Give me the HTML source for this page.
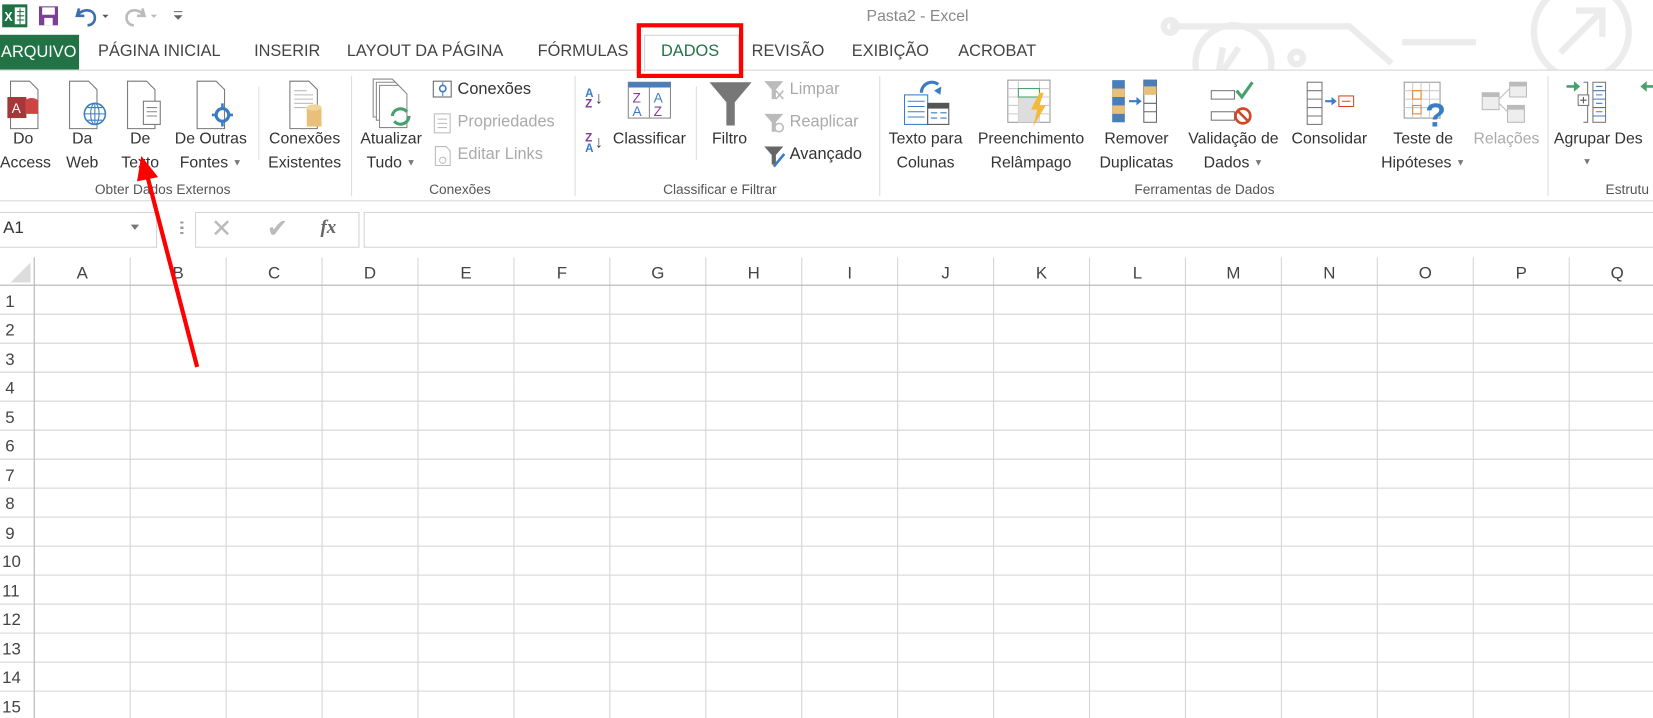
<!DOCTYPE html>
<html><head><meta charset="utf-8"><style>
html,body{margin:0;padding:0;overflow:hidden;background:#fff;width:1653px;height:718px}
#w{position:absolute;left:0;top:0;width:1568px;height:681px;transform:scale(1.05421,1.05433);transform-origin:0 0;font-family:"Liberation Sans",sans-serif;color:#444}
.a{position:absolute;white-space:nowrap}
.tab{position:absolute;top:40px;font-size:15.5px;color:#444}
.lb{position:absolute;font-size:15px;color:#333;text-align:center;line-height:23px;white-space:nowrap}
.lb small,.dd{font-size:9px;color:#777;vertical-align:2px}
.gl{position:absolute;top:172px;font-size:13px;color:#555;white-space:nowrap}
.sep{position:absolute;top:72px;width:1px;height:114px;background:#ddd}
.dis{color:#aaa}
</style></head><body><div id="w">
<!-- background circuit -->
<svg class="a" style="left:1080px;top:0" width="488" height="66" viewBox="0 0 488 66"><g fill="none" stroke="#ececec" stroke-width="6"><path d="M30 25 L200 25 L240 60"/><circle cx="30" cy="25" r="6"/><circle cx="90" cy="60" r="36"/><path d="M75 75 L95 45 M80 45 L75 75 L100 70"/><circle cx="150" cy="55" r="6"/><circle cx="420" cy="30" r="45"/><path d="M400 50 L440 10 M415 10 L440 10 L440 35"/><path d="M250 40 L320 40"/></g></svg>
<!-- QAT -->
<svg class="a" style="left:2px;top:4px" width="24" height="22"><rect x="0" y="0" width="24" height="22" fill="#1e7145"/><rect x="12" y="3" width="10" height="16" fill="#fff"/><text x="2" y="16" font-size="12" fill="#fff" font-weight="bold" font-family="Liberation Sans">X</text><path d="M14 7h7M14 11h7M14 15h7M17 4v15" stroke="#1e7145"/></svg>
<svg class="a" style="left:36px;top:5px" width="20" height="20"><rect x="1" y="1" width="18" height="18" fill="#7e3d97"/><rect x="4" y="2" width="12" height="7" fill="#fff"/><rect x="6" y="12" width="8" height="7" fill="#fff"/></svg>
<svg class="a" style="left:70px;top:4px" width="40" height="22"><path d="M5 4 L3 11 L10 11 M4 10 C8 4 20 4 20 13 C20 18 16 20 13 20" fill="none" stroke="#3b6fb0" stroke-width="2.5"/><path d="M27 10l3 3 3-3z" fill="#555"/></svg>
<svg class="a" style="left:115px;top:4px" width="45" height="22"><path d="M20 4 L22 11 L15 11 M21 10 C17 4 5 4 5 13 C5 18 9 20 12 20" fill="none" stroke="#bbb" stroke-width="2.5"/><path d="M28 10l3 3 3-3z" fill="#bbb"/></svg>
<svg class="a" style="left:164px;top:9px" width="10" height="12"><path d="M1 2h8M2 6l3 3 3-3z" stroke="#666" fill="#666"/></svg>
<div class="a" style="left:822px;top:7px;font-size:15px;color:#888">Pasta2 - Excel</div>
<!-- tabs -->
<div class="a" style="left:0;top:33px;width:74px;height:33px;background:#217346;color:#fff;font-size:15.5px;line-height:33px;padding-left:1px">ARQUIVO</div>
<div class="tab" style="left:93px">PÁGINA INICIAL</div>
<div class="tab" style="left:241px">INSERIR</div>
<div class="tab" style="left:329px">LAYOUT DA PÁGINA</div>
<div class="tab" style="left:510px">FÓRMULAS</div>
<div class="a" style="left:611px;top:33px;width:88px;height:34px;border:1px solid #d4d4d4;border-bottom:none;background:#fff"></div>
<div class="tab" style="left:627px;color:#217346">DADOS</div>
<div class="tab" style="left:713px">REVISÃO</div>
<div class="tab" style="left:808px">EXIBIÇÃO</div>
<div class="tab" style="left:909px">ACROBAT</div>
<div class="a" style="left:0;top:66px;width:1568px;height:1px;background:#d4d4d4"></div>
<div class="a" style="left:0;top:190px;width:1568px;height:1px;background:#d4d4d4"></div>
<div class="a" style="left:0;top:191px;width:1568px;height:44px;background:#fff"></div>
<div class="a" style="left:604px;top:22px;width:93px;height:44px;border:4px solid #f00"></div>
<!-- ribbon icons group 1 -->
<svg class="a" style="left:6px;top:76px" width="40" height="48"><path d="M4 1h18l8 8v37H4z" fill="#fff" stroke="#777"/><rect x="1" y="16" width="18" height="20" fill="#a4373a"/><text x="5" y="31" font-size="13" fill="#fff" font-family="Liberation Sans">A</text><ellipse cx="24" cy="20" rx="6" ry="3" fill="#c44" /><rect x="18" y="20" width="12" height="12" fill="#c44"/></svg>
<svg class="a" style="left:62px;top:76px" width="40" height="48"><path d="M4 1h18l8 8v37H4z" fill="#fff" stroke="#777"/><circle cx="28" cy="32" r="10" fill="#fff" stroke="#3b7dc4" stroke-width="1.5"/><path d="M18 32h20M28 22v20M21 26h14M21 38h14" stroke="#3b7dc4"/><ellipse cx="28" cy="32" rx="4" ry="10" fill="none" stroke="#3b7dc4"/></svg>
<svg class="a" style="left:117px;top:76px" width="40" height="48"><path d="M4 1h18l8 8v37H4z" fill="#fff" stroke="#777"/><rect x="19" y="20" width="16" height="22" fill="#fff" stroke="#777"/><path d="M22 26h10M22 30h10M22 34h10" stroke="#888"/></svg>
<svg class="a" style="left:183px;top:76px" width="40" height="48"><path d="M4 1h18l8 8v37H4z" fill="#fff" stroke="#777"/><circle cx="28" cy="33" r="6" fill="none" stroke="#3b7dc4" stroke-width="3"/><path d="M28 22v5M28 39v5M18 33h4M34 33h4" stroke="#3b7dc4" stroke-width="2.5"/></svg>
<div class="sep" style="left:245px;top:82px;height:70px"></div>
<svg class="a" style="left:271px;top:76px" width="45" height="48"><path d="M4 1h18l8 8v37H4z" fill="#fff" stroke="#777"/><path d="M8 10h12M8 14h18M8 18h18M8 22h18M8 26h12" stroke="#bbb"/><rect x="20" y="26" width="14" height="18" fill="#e8c07a"/><ellipse cx="27" cy="26" rx="7" ry="3" fill="#f0d49a"/></svg>
<div class="lb" style="left:0;top:120px;width:44px">Do<br>Access</div>
<div class="lb" style="left:56px;top:120px;width:44px">Da<br>Web</div>
<div class="lb" style="left:111px;top:120px;width:44px">De<br>Texto</div>
<div class="lb" style="left:160px;top:120px;width:80px">De Outras<br>Fontes <small>▼</small></div>
<div class="lb" style="left:250px;top:120px;width:78px">Conexões<br>Existentes</div>
<div class="gl" style="left:90px">Obter Dados Externos</div>
<div class="sep" style="left:333px"></div>
<!-- conexoes -->
<svg class="a" style="left:350px;top:74px" width="48" height="50"><path d="M4 1h18l6 6v30H4z" fill="#fff" stroke="#888"/><path d="M7 4h18l6 6v30H7z" fill="#fff" stroke="#888"/><path d="M10 7h18l8 8v32H10z" fill="#fff" stroke="#888"/><path d="M22 36a8 8 0 0 1 14-4M38 36a8 8 0 0 1-14 5" fill="none" stroke="#47a16b" stroke-width="3"/></svg>
<div class="lb" style="left:337px;top:120px;width:68px">Atualizar<br>Tudo <small>▼</small></div>
<svg class="a" style="left:410px;top:76px" width="20" height="20"><rect x="1" y="1" width="17" height="15" fill="#fff" stroke="#666"/><circle cx="10" cy="8" r="3" fill="none" stroke="#3b7dc4" stroke-width="1.5"/><path d="M10 2v3M10 11v4" stroke="#3b7dc4"/></svg>
<div class="a" style="left:434px;top:76px;font-size:15.5px;color:#333">Conexões</div>
<svg class="a" style="left:410px;top:107px" width="20" height="20"><rect x="2" y="1" width="15" height="18" fill="#fff" stroke="#bbb"/><path d="M5 6h9M5 10h9M5 14h9" stroke="#bbb"/></svg>
<div class="a dis" style="left:434px;top:107px;font-size:15.5px">Propriedades</div>
<svg class="a" style="left:410px;top:138px" width="20" height="20"><path d="M3 1h10l4 4v14H3z" fill="#fff" stroke="#bbb"/><circle cx="10" cy="14" r="3" fill="none" stroke="#bbb"/></svg>
<div class="a dis" style="left:434px;top:138px;font-size:15.5px">Editar Links</div>
<div class="gl" style="left:407px">Conexões</div>
<div class="sep" style="left:545px"></div>
<!-- classificar -->
<div class="a" style="left:555px;top:84px;font-size:11px;line-height:10px;font-weight:bold;color:#3b7dc4">A<br><span style="color:#7e3d97">Z</span></div><div class="a" style="left:564px;top:85px;font-size:16px;color:#444">↓</div>
<div class="a" style="left:555px;top:126px;font-size:11px;line-height:10px;font-weight:bold;color:#7e3d97">Z<br><span style="color:#3b7dc4">A</span></div><div class="a" style="left:564px;top:127px;font-size:16px;color:#444">↓</div>
<svg class="a" style="left:595px;top:77px" width="42" height="36"><rect x="1" y="1" width="40" height="34" fill="#fff" stroke="#888"/><rect x="1" y="1" width="40" height="5" fill="#4a7ebb"/><path d="M21 6v29" stroke="#888"/><text x="5" y="20" font-size="13" fill="#7e3d97" font-family="Liberation Sans">Z</text><text x="5" y="33" font-size="13" fill="#3b7dc4" font-family="Liberation Sans">A</text><text x="25" y="20" font-size="13" fill="#3b7dc4" font-family="Liberation Sans">A</text><text x="25" y="33" font-size="13" fill="#7e3d97" font-family="Liberation Sans">Z</text></svg>
<div class="lb" style="left:578px;top:120px;width:76px">Classificar</div>
<div class="sep" style="left:660px;top:82px;height:70px"></div>
<svg class="a" style="left:672px;top:77px" width="42" height="42"><path d="M1 1h40L25 20v22h-8V20z" fill="#777"/></svg>
<div class="lb" style="left:670px;top:120px;width:44px">Filtro</div>
<svg class="a" style="left:724px;top:76px" width="22" height="20"><path d="M1 1h18l-7 8v9h-4V9z" fill="#bbb"/><path d="M12 10l7 8M19 10l-7 8" stroke="#bbb" stroke-width="1.5"/></svg>
<div class="a dis" style="left:749px;top:76px;font-size:15.5px">Limpar</div>
<svg class="a" style="left:724px;top:107px" width="22" height="20"><path d="M1 1h18l-7 8v9h-4V9z" fill="#bbb"/><circle cx="15" cy="14" r="4" fill="#fff" stroke="#bbb" stroke-width="1.5"/></svg>
<div class="a dis" style="left:749px;top:107px;font-size:15.5px">Reaplicar</div>
<svg class="a" style="left:724px;top:138px" width="22" height="22"><path d="M1 1h18l-7 8v9h-4V9z" fill="#666"/><path d="M20 8l-10 12" stroke="#3b7dc4" stroke-width="2.5"/></svg>
<div class="a" style="left:749px;top:138px;font-size:15.5px;color:#333">Avançado</div>
<div class="gl" style="left:629px">Classificar e Filtrar</div>
<div class="sep" style="left:834px"></div>
<!-- ferramentas -->
<svg class="a" style="left:856px;top:74px" width="48" height="48"><path d="M18 14a10 10 0 0 1 16-8" fill="none" stroke="#3b7dc4" stroke-width="3"/><path d="M30 12l6 4 1-8z" fill="#3b7dc4"/><rect x="2" y="16" width="22" height="28" fill="#fff" stroke="#3b7dc4"/><path d="M5 22h16M5 27h16M5 32h16M5 37h16" stroke="#3b7dc4"/><rect x="24" y="24" width="20" height="20" fill="#fff" stroke="#555"/><rect x="24" y="24" width="20" height="5" fill="#555"/><path d="M27 33h6M36 33h6M27 38h6M36 38h6" stroke="#3b7dc4"/></svg>
<div class="lb" style="left:838px;top:120px;width:80px">Texto para<br>Colunas</div>
<svg class="a" style="left:954px;top:74px" width="48" height="48"><rect x="2" y="2" width="40" height="40" fill="#fff" stroke="#999"/><path d="M2 10h40M2 18h40M2 26h40M2 34h40M12 2v40M32 2v40" stroke="#ccc"/><rect x="12" y="18" width="20" height="24" fill="#ddd"/><rect x="12" y="10" width="20" height="8" fill="#fff" stroke="#47a16b"/><path d="M32 14l-8 16h6l-4 16 12-20h-6l4-12z" fill="#f2b93b"/></svg>
<div class="lb" style="left:920px;top:120px;width:116px">Preenchimento<br>Relâmpago</div>
<svg class="a" style="left:1053px;top:74px" width="50" height="48"><rect x="2" y="2" width="12" height="40" fill="#4a7ebb"/><rect x="2" y="10" width="12" height="8" fill="#e8c07a"/><rect x="2" y="26" width="12" height="8" fill="#e8c07a"/><rect x="32" y="2" width="12" height="40" fill="#fff" stroke="#666"/><rect x="32" y="2" width="12" height="6" fill="#4a7ebb"/><rect x="32" y="8" width="12" height="8" fill="#e8c07a"/><path d="M32 24h12M32 32h12" stroke="#666"/><path d="M18 22h8" stroke="#3b7dc4" stroke-width="2"/><path d="M25 18l5 4-5 4z" fill="#3b7dc4"/></svg>
<div class="lb" style="left:1036px;top:120px;width:84px">Remover<br>Duplicatas</div>
<svg class="a" style="left:1147px;top:76px" width="46" height="46"><rect x="2" y="10" width="22" height="8" fill="#fff" stroke="#777"/><rect x="2" y="30" width="22" height="8" fill="#fff" stroke="#777"/><path d="M26 10l5 6 10-14" fill="none" stroke="#47a16b" stroke-width="3"/><circle cx="32" cy="34" r="7" fill="#fff" stroke="#d24726" stroke-width="2.5"/><path d="M27 29l10 10" stroke="#d24726" stroke-width="2.5"/></svg>
<div class="lb" style="left:1120px;top:120px;width:100px">Validação de<br>Dados <small>▼</small></div>
<svg class="a" style="left:1238px;top:76px" width="50" height="46"><rect x="2" y="2" width="14" height="40" fill="#fff" stroke="#777"/><path d="M2 10h14M2 18h14M2 26h14M2 34h14" stroke="#777"/><path d="M19 20h7" stroke="#3b7dc4" stroke-width="2"/><path d="M25 16l5 4-5 4z" fill="#3b7dc4"/><rect x="32" y="15" width="14" height="10" fill="#fff" stroke="#d24726"/><path d="M35 20h8" stroke="#d24726"/></svg>
<div class="lb" style="left:1219px;top:120px;width:84px">Consolidar</div>
<svg class="a" style="left:1330px;top:76px" width="46" height="50"><rect x="2" y="2" width="34" height="34" fill="#fff" stroke="#999"/><path d="M2 10h34M2 18h34M2 26h34M10 2v34M18 2v34M26 2v34" stroke="#ccc"/><rect x="10" y="10" width="8" height="8" fill="none" stroke="#e8822a"/><rect x="10" y="24" width="8" height="8" fill="none" stroke="#e8822a"/><text x="22" y="44" font-size="32" font-weight="bold" fill="#3b7dc4" font-family="Liberation Sans">?</text></svg>
<div class="lb" style="left:1300px;top:120px;width:100px">Teste de<br>Hipóteses <small>▼</small></div>
<svg class="a" style="left:1404px;top:76px" width="48" height="44"><rect x="2" y="12" width="16" height="16" fill="#eee" stroke="#bbb"/><rect x="2" y="12" width="16" height="4" fill="#bbb"/><rect x="28" y="2" width="16" height="14" fill="#eee" stroke="#bbb"/><rect x="28" y="2" width="16" height="4" fill="#bbb"/><rect x="26" y="24" width="16" height="16" fill="#eee" stroke="#bbb"/><rect x="26" y="24" width="16" height="4" fill="#bbb"/><path d="M18 18l10-10M18 22l8 8" stroke="#bbb"/></svg>
<div class="lb dis" style="left:1394px;top:120px;width:70px">Relações</div>
<div class="gl" style="left:1076px">Ferramentas de Dados</div>
<div class="sep" style="left:1468px"></div>
<svg class="a" style="left:1484px;top:76px" width="46" height="46"><path d="M2 6h10" stroke="#47a16b" stroke-width="2.5"/><path d="M9 1l6 5-6 5z" fill="#47a16b"/><path d="M18 2h4v38h-4" fill="none" stroke="#777"/><rect x="13" y="14" width="10" height="10" fill="#fff" stroke="#777"/><path d="M15 19h6M18 16v6" stroke="#555"/><rect x="27" y="2" width="12" height="38" fill="#fff" stroke="#777"/><path d="M27 10h12M27 18h12M27 26h12M27 34h12M30 6h6M30 14h6M30 22h6M30 30h6" stroke="#3b7dc4"/></svg>
<svg class="a" style="left:1556px;top:76px" width="12" height="20"><path d="M12 6H4" stroke="#47a16b" stroke-width="2.5"/><path d="M6 1L0 6l6 5z" fill="#47a16b"/></svg>
<div class="lb" style="left:1474px;top:120px;width:100px;text-align:left">Agrupar Des</div>
<div class="a" style="left:1501px;top:148px;font-size:9px;color:#777">▼</div>
<div class="gl" style="left:1523px">Estrutu</div>
<!-- formula bar -->
<div class="a" style="left:0;top:201px;width:148px;height:32px;border:1px solid #d4d4d4;border-left:none"></div>
<div class="a" style="left:3px;top:208px;font-size:16px;color:#333">A1</div>
<div class="a" style="left:124px;top:213px;width:0;height:0;border:4px solid transparent;border-top:5px solid #777"></div>
<div class="a" style="left:171px;top:210px;width:3px;height:14px;background:repeating-linear-gradient(#999 0 2px,transparent 2px 5px)"></div>
<div class="a" style="left:185px;top:201px;width:154px;height:32px;border:1px solid #d4d4d4"></div>
<div class="a" style="left:200px;top:203px;font-size:24px;color:#bbb">✕</div>
<div class="a" style="left:253px;top:203px;font-size:24px;color:#bbb">✔</div>
<div class="a" style="left:304px;top:205px;font-size:18px;font-family:'Liberation Serif',serif;font-style:italic;font-weight:bold;color:#666">fx</div>
<div class="a" style="left:345px;top:201px;width:1223px;height:32px;border:1px solid #d4d4d4;border-right:none"></div>
<!-- grid -->
<svg class="a" style="left:0;top:244px" width="1568" height="437">
<path d="M10 24L29 5V24z" fill="#dcdcdc"/>
<g stroke="#d4d4d4" stroke-width="1">
<path d="M0 26.5H1568"/>
<path d="M32.5 0V437M123.5 0V437M214.5 0V437M305.5 0V437M396.5 0V437M487.5 0V437M578.5 0V437M669.5 0V437M760.5 0V437M851.5 0V437M942.5 0V437M1033.5 0V437M1124.5 0V437M1215.5 0V437M1306.5 0V437M1397.5 0V437M1488.5 0V437"/>
<path d="M0 54H1568M0 81.5H1568M0 109H1568M0 136.5H1568M0 164H1568M0 191.5H1568M0 219H1568M0 246.5H1568M0 274H1568M0 301.5H1568M0 329H1568M0 356.5H1568M0 384H1568M0 411.5H1568"/>
</g>
<path d="M0 26.5H1568" stroke="#bbb"/><path d="M32.5 0V437" stroke="#bbb"/>
<g font-family="Liberation Sans" font-size="16" fill="#444" text-anchor="middle">
<text x="78" y="20">A</text><text x="169" y="20">B</text><text x="260" y="20">C</text><text x="351" y="20">D</text><text x="442" y="20">E</text><text x="533" y="20">F</text><text x="624" y="20">G</text><text x="715" y="20">H</text><text x="806" y="20">I</text><text x="897" y="20">J</text><text x="988" y="20">K</text><text x="1079" y="20">L</text><text x="1170" y="20">M</text><text x="1261" y="20">N</text><text x="1352" y="20">O</text><text x="1443" y="20">P</text><text x="1534" y="20">Q</text>
</g>
<g font-family="Liberation Sans" font-size="16" fill="#444">
<text x="5" y="47">1</text><text x="5" y="74">2</text><text x="5" y="102">3</text><text x="5" y="129">4</text><text x="5" y="157">5</text><text x="5" y="184">6</text><text x="5" y="212">7</text><text x="5" y="239">8</text><text x="5" y="267">9</text><text x="2" y="294">10</text><text x="2" y="322">11</text><text x="2" y="349">12</text><text x="2" y="377">13</text><text x="2" y="404">14</text><text x="2" y="432">15</text>
</g>
</svg>
<!-- red arrow -->
<svg class="a" style="left:0;top:0" width="1568" height="681"><path d="M187 348L140 168" stroke="#f00" stroke-width="4"/><path d="M134 148L130 172L150 168z" fill="#f00"/></svg>
</div></body></html>
